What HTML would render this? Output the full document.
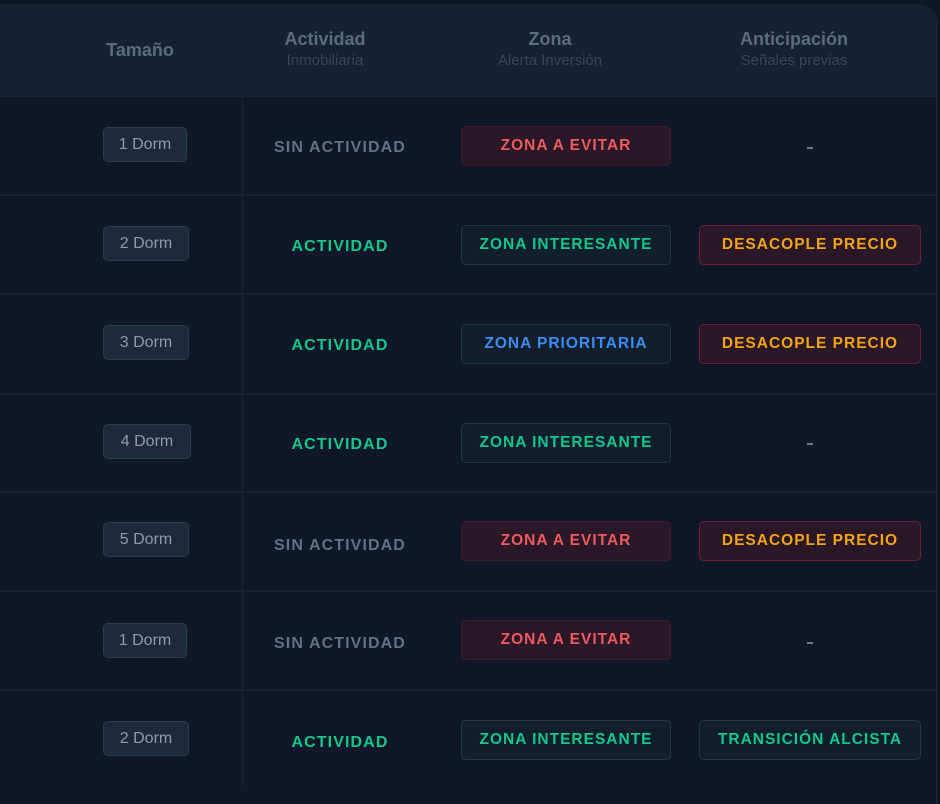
<!DOCTYPE html>
<html><head><meta charset="utf-8"><style>
*{margin:0;padding:0;box-sizing:border-box}
body{width:940px;height:788px;background:#0f1729;font-family:"Liberation Sans",sans-serif;position:relative;overflow:hidden}
.card{position:absolute;left:-20px;top:4px;width:957px;height:800px;border-top-right-radius:18px;border-right:1px solid #1c2739;background:#0f1729}
.head{position:absolute;left:0;top:4px;width:936px;height:93px;background:#162134;border-top-right-radius:18px}
.vline{position:absolute;left:242px;top:4px;width:1px;height:784px;background:#18233a}
.hl{position:absolute;left:0;width:936px;height:2px;background:#172235}
.ht{position:absolute;text-align:center;color:#5a6c80;font-weight:bold;font-size:18px;transform:translateX(-50%);white-space:nowrap}
.ht span{display:block;font-weight:normal;font-size:15px;color:#36475a;margin-top:2px}
.dorm{position:absolute;height:35px;border-radius:5px;background:#1d2a3c;border:1px solid #2b3a4f;color:#8d9bb0;font-size:16px;line-height:33px;text-align:center}
.act{position:absolute;width:200px;left:240px;text-align:center;font-weight:bold;font-size:16px;letter-spacing:1.1px}
.b{position:absolute;height:40px;border-radius:5px;font-weight:bold;font-size:15.5px;line-height:38px;text-align:center;letter-spacing:1px;white-space:nowrap}
.z{left:461px;width:210px}
.a{left:699px;width:222px}
.red{background:#2a1727;border:1px solid #3e1c2b;color:#ee5b5e}
.grn{background:#111e2c;border:1px solid #253549;color:#13c78b}
.blu{background:#111e2c;border:1px solid #253549;color:#3d8cf0}
.org{background:#2a1727;border:1px solid #6b2030;color:#f2a415}
.dash{position:absolute;left:807px;width:6px;height:2px;background:#6d7b8f}
</style></head><body>
<div class="card"></div>
<div class="head"></div>
<div class="vline"></div>
<div class="ht" style="left:140px;top:40px">Tamaño</div>
<div class="ht" style="left:325px;top:29px">Actividad<span>Inmobiliaria</span></div>
<div class="ht" style="left:550px;top:29px">Zona<span>Alerta Inversión</span></div>
<div class="ht" style="left:794px;top:29px">Anticipación<span>Señales previas</span></div>

<div class="hl" style="top:96px;height:1px"></div>
<div class="hl" style="top:194px"></div>
<div class="hl" style="top:293px"></div>
<div class="hl" style="top:393px"></div>
<div class="hl" style="top:491px"></div>
<div class="hl" style="top:590px"></div>
<div class="hl" style="top:689px"></div>

<div class="dorm" style="left:103px;top:127px;width:84px">1 Dorm</div>
<div class="act" style="top:139px;color:#5f7287">SIN ACTIVIDAD</div>
<div class="b z red" style="top:126px">ZONA A EVITAR</div>
<div class="dash" style="top:147px"></div>

<div class="dorm" style="left:103px;top:226px;width:86px">2 Dorm</div>
<div class="act" style="top:238px;color:#12c78a">ACTIVIDAD</div>
<div class="b z grn" style="top:225px">ZONA INTERESANTE</div>
<div class="b a org" style="top:225px">DESACOPLE PRECIO</div>

<div class="dorm" style="left:103px;top:325px;width:86px">3 Dorm</div>
<div class="act" style="top:337px;color:#12c78a">ACTIVIDAD</div>
<div class="b z blu" style="top:324px">ZONA PRIORITARIA</div>
<div class="b a org" style="top:324px">DESACOPLE PRECIO</div>

<div class="dorm" style="left:103px;top:424px;width:88px">4 Dorm</div>
<div class="act" style="top:436px;color:#12c78a">ACTIVIDAD</div>
<div class="b z grn" style="top:423px">ZONA INTERESANTE</div>
<div class="dash" style="top:443px"></div>

<div class="dorm" style="left:103px;top:522px;width:86px">5 Dorm</div>
<div class="act" style="top:537px;color:#5f7287">SIN ACTIVIDAD</div>
<div class="b z red" style="top:521px">ZONA A EVITAR</div>
<div class="b a org" style="top:521px">DESACOPLE PRECIO</div>

<div class="dorm" style="left:103px;top:623px;width:84px">1 Dorm</div>
<div class="act" style="top:635px;color:#5f7287">SIN ACTIVIDAD</div>
<div class="b z red" style="top:620px">ZONA A EVITAR</div>
<div class="dash" style="top:642px"></div>

<div class="dorm" style="left:103px;top:721px;width:86px">2 Dorm</div>
<div class="act" style="top:734px;color:#12c78a">ACTIVIDAD</div>
<div class="b z grn" style="top:720px">ZONA INTERESANTE</div>
<div class="b a grn" style="top:720px">TRANSICIÓN ALCISTA</div>
</body></html>
